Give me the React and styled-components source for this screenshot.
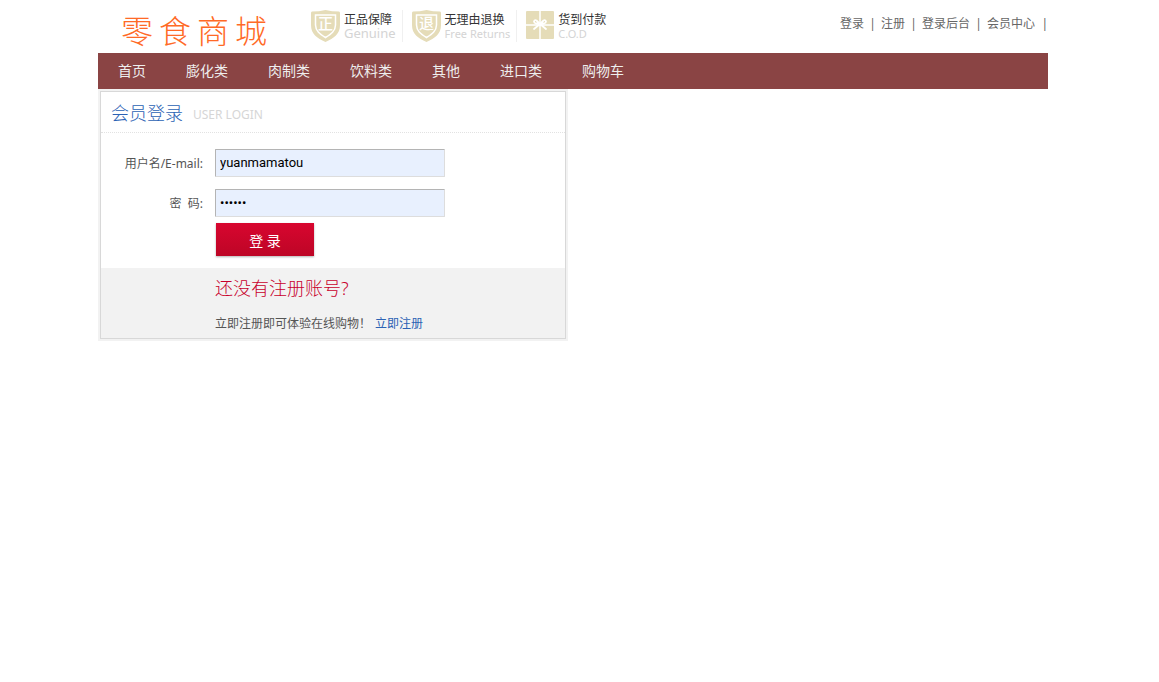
// Libraries.
import styled, { createGlobalStyle } from "styled-components";

// Styles.
const GlobalStyle = createGlobalStyle`
 * {
  box-sizing: border-box;
  margin: 0;
  padding: 0;
 }

 body {
  padding-right: 13px;
  background-color: #fff;
  color: #555;
  font-family: "Noto Sans", "Noto Sans CJK SC", sans-serif;
  font-size: 12px;
  line-height: 20px;
 }

 ul {
  list-style: none;
 }

 a {
  color: inherit;
  text-decoration: none;
 }
`;

const StyledPage = styled.div`
 max-width: 950px;
 margin: 0 auto;
`;

const StyledHeader = styled.header`
 display: flex;
 align-items: flex-start;
 height: 53px;
`;

const StyledLogo = styled.a`
 display: flex;
 gap: 6px;
 width: 213px;
 padding: 8px 0 0 23px;
 color: #ff6a26;
 font-family: "Noto Sans CJK SC", sans-serif;
 font-size: 32px;
 font-weight: 300;
 line-height: 42px;
`;

const StyledPromises = styled.ul`
 display: flex;
 padding-top: 10px;

 & li {
  display: flex;
  gap: 4px;
  height: 32px;
  padding-right: 6px;
 }

 & li + li {
  padding-left: 9px;
  border-left: 1px solid #f0f0f0;
 }
`;

const StyledPromiseText = styled.p`
 padding-top: 3px;
 color: #333;
 line-height: 14px;

 & span {
  display: block;
  color: #d4d4d4;
  font-size: ${(props) => (props.$large ? "13px" : "11px")};
  line-height: 13px;
 }
`;

const StyledUserLinks = styled.ul`
 display: flex;
 margin-left: auto;
 padding-top: 14px;
 color: #666;

 & li {
  display: flex;
 }

 & li::after {
  content: "|";
  width: 17px;
  text-align: center;
 }

 & li:last-child::after {
  width: 13px;
  text-align: right;
 }
`;

const StyledNav = styled.nav`
 background-color: #8a4444;

 & ul {
  display: flex;
 }

 & a {
  display: block;
  padding: 0 20px;
  color: #eee;
  font-size: 14px;
  line-height: 36px;
 }
`;

const StyledPanel = styled.main`
 max-width: 470px;
 border: 2px solid #f2f2f2;
`;

const StyledPanelInner = styled.div`
 border: 1px solid #d8d8d8;
`;

const StyledTitle = styled.h1`
 display: flex;
 align-items: center;
 gap: 10px;
 padding: 2px 0 0 10px;
 border-bottom: 1px dotted #e2e2e2;
 color: #2b62b4;
 font-size: 18px;
 font-weight: 300;
 line-height: 38px;

 & span {
  padding-top: 4px;
  color: #d6d6d6;
  font-size: 12px;
  font-weight: 400;
  line-height: 34px;
 }
`;

const StyledForm = styled.form`
 padding: 16px 0 12px;
`;

const StyledField = styled.div`
 display: flex;
 align-items: center;
 margin-bottom: 12px;

 & + & {
  margin-bottom: 6px;
 }

 & label {
  width: 102px;
  margin-right: 12px;
  padding-top: 2px;
  text-align: right;
  white-space: pre;
 }

 & input {
  width: 230px;
  height: 28px;
  padding: 0 4px 2px;
  border: 1px solid #ddd;
  border-top-color: #b4b4b4;
  border-left-color: #b4b4b4;
  border-radius: 1px;
  outline: none;
  background-color: #e8f0fe;
  color: #000;
  font-family: Roboto, sans-serif;
  font-size: 13px;
 }
`;

const StyledSubmit = styled.button`
 display: block;
 width: 98px;
 height: 33px;
 margin-left: 115px;
 padding-top: 2px;
 border: none;
 background: linear-gradient(#d8062f, #bd0526);
 box-shadow: 0 1px 2px rgba(0, 0, 0, 0.3);
 color: #fff;
 font-family: inherit;
 font-size: 14px;
 line-height: 31px;
 cursor: pointer;
`;

const StyledRegister = styled.section`
 padding: 8px 0 4px 114px;
 background-color: #f2f2f2;

 & h2 {
  margin-bottom: 14px;
  color: #c8002c;
  font-size: 18px;
  font-weight: 300;
  line-height: 24px;
 }

 & a {
  margin-left: 4px;
  color: #2b62b4;
 }
`;

const navItems = ["首页", "膨化类", "肉制类", "饮料类", "其他", "进口类", "购物车"];
const userLinks = ["登录", "注册", "登录后台", "会员中心"];

// Components.
function Shield({ sign }) {
 return (
  <svg width="29" height="32" viewBox="0 0 29 32" aria-hidden="true">
   <path
    d="M1 1.500Q8 1.500 14.500 0Q21 1.500 28 1.500Q29 1.500 29 3V15C29 24 23 28 14.500 32C6 28 0 24 0 15V3Q0 1.500 1 1.500Z"
    fill="#e5dcb8"
   />
   <path
    d="M4.500 5H24.500V15C24.500 21 20 24 14.500 27.500C9 24 4.500 21 4.500 15Z"
    fill="none"
    stroke="#fff"
    strokeWidth="1.500"
   />
   <text
    x="14.500"
    y="19"
    fill="#fff"
    fontFamily="Noto Sans CJK SC, sans-serif"
    fontSize="15"
    fontWeight="500"
    textAnchor="middle"
   >
    {sign}
   </text>
  </svg>
 );
}

function Gift() {
 return (
  <svg width="28" height="30" viewBox="0 0 28 30" aria-hidden="true">
   <rect y="1" width="28" height="28" rx="1" fill="#e5dcb8" />
   <path d="M14 1V29M0 15H28" stroke="#fff" strokeWidth="1.500" />
   <g fill="none" stroke="#fff" strokeWidth="1.800" strokeLinecap="round">
    <path d="M14 14L10.500 10.500Q8.500 9.500 8 11.500Q8 13 10 13.500L14 14" />
    <path d="M14 14L17.500 10.500Q19.500 9.500 20 11.500Q20 13 18 13.500L14 14" />
    <path d="M14 14L8 19M14 14L20 19" />
   </g>
  </svg>
 );
}

export default function App() {
 return (
  <>
   <GlobalStyle />
   <StyledPage>
    <StyledHeader>
     <StyledLogo href="#">
      <span>零</span>
      <span>食</span>
      <span>商</span>
      <span>城</span>
     </StyledLogo>

     <StyledPromises>
      <li>
       <Shield sign="正" />
       <StyledPromiseText $large>
        正品保障<span>Genuine</span>
       </StyledPromiseText>
      </li>
      <li>
       <Shield sign="退" />
       <StyledPromiseText>
        无理由退换<span>Free Returns</span>
       </StyledPromiseText>
      </li>
      <li>
       <Gift />
       <StyledPromiseText>
        货到付款<span>C.O.D</span>
       </StyledPromiseText>
      </li>
     </StyledPromises>

     <StyledUserLinks>
      {userLinks.map((link) => (
       <li key={link}>
        <a href="#">{link}</a>
       </li>
      ))}
     </StyledUserLinks>
    </StyledHeader>

    <StyledNav>
     <ul>
      {navItems.map((item) => (
       <li key={item}>
        <a href="#">{item}</a>
       </li>
      ))}
     </ul>
    </StyledNav>

    <StyledPanel>
     <StyledPanelInner>
      <StyledTitle>
       会员登录 <span>USER LOGIN</span>
      </StyledTitle>

      <StyledForm onSubmit={(e) => e.preventDefault()}>
       <StyledField>
        <label htmlFor="username">用户名/E-mail:</label>
        <input id="username" type="text" defaultValue="yuanmamatou" />
       </StyledField>
       <StyledField>
        <label htmlFor="password">{"密  码:"}</label>
        <input id="password" type="password" defaultValue="123456" />
       </StyledField>
       <StyledSubmit type="submit">登 录</StyledSubmit>
      </StyledForm>

      <StyledRegister>
       <h2>还没有注册账号?</h2>
       <p>
        立即注册即可体验在线购物！<a href="#">立即注册</a>
       </p>
      </StyledRegister>
     </StyledPanelInner>
    </StyledPanel>
   </StyledPage>
  </>
 );
}
